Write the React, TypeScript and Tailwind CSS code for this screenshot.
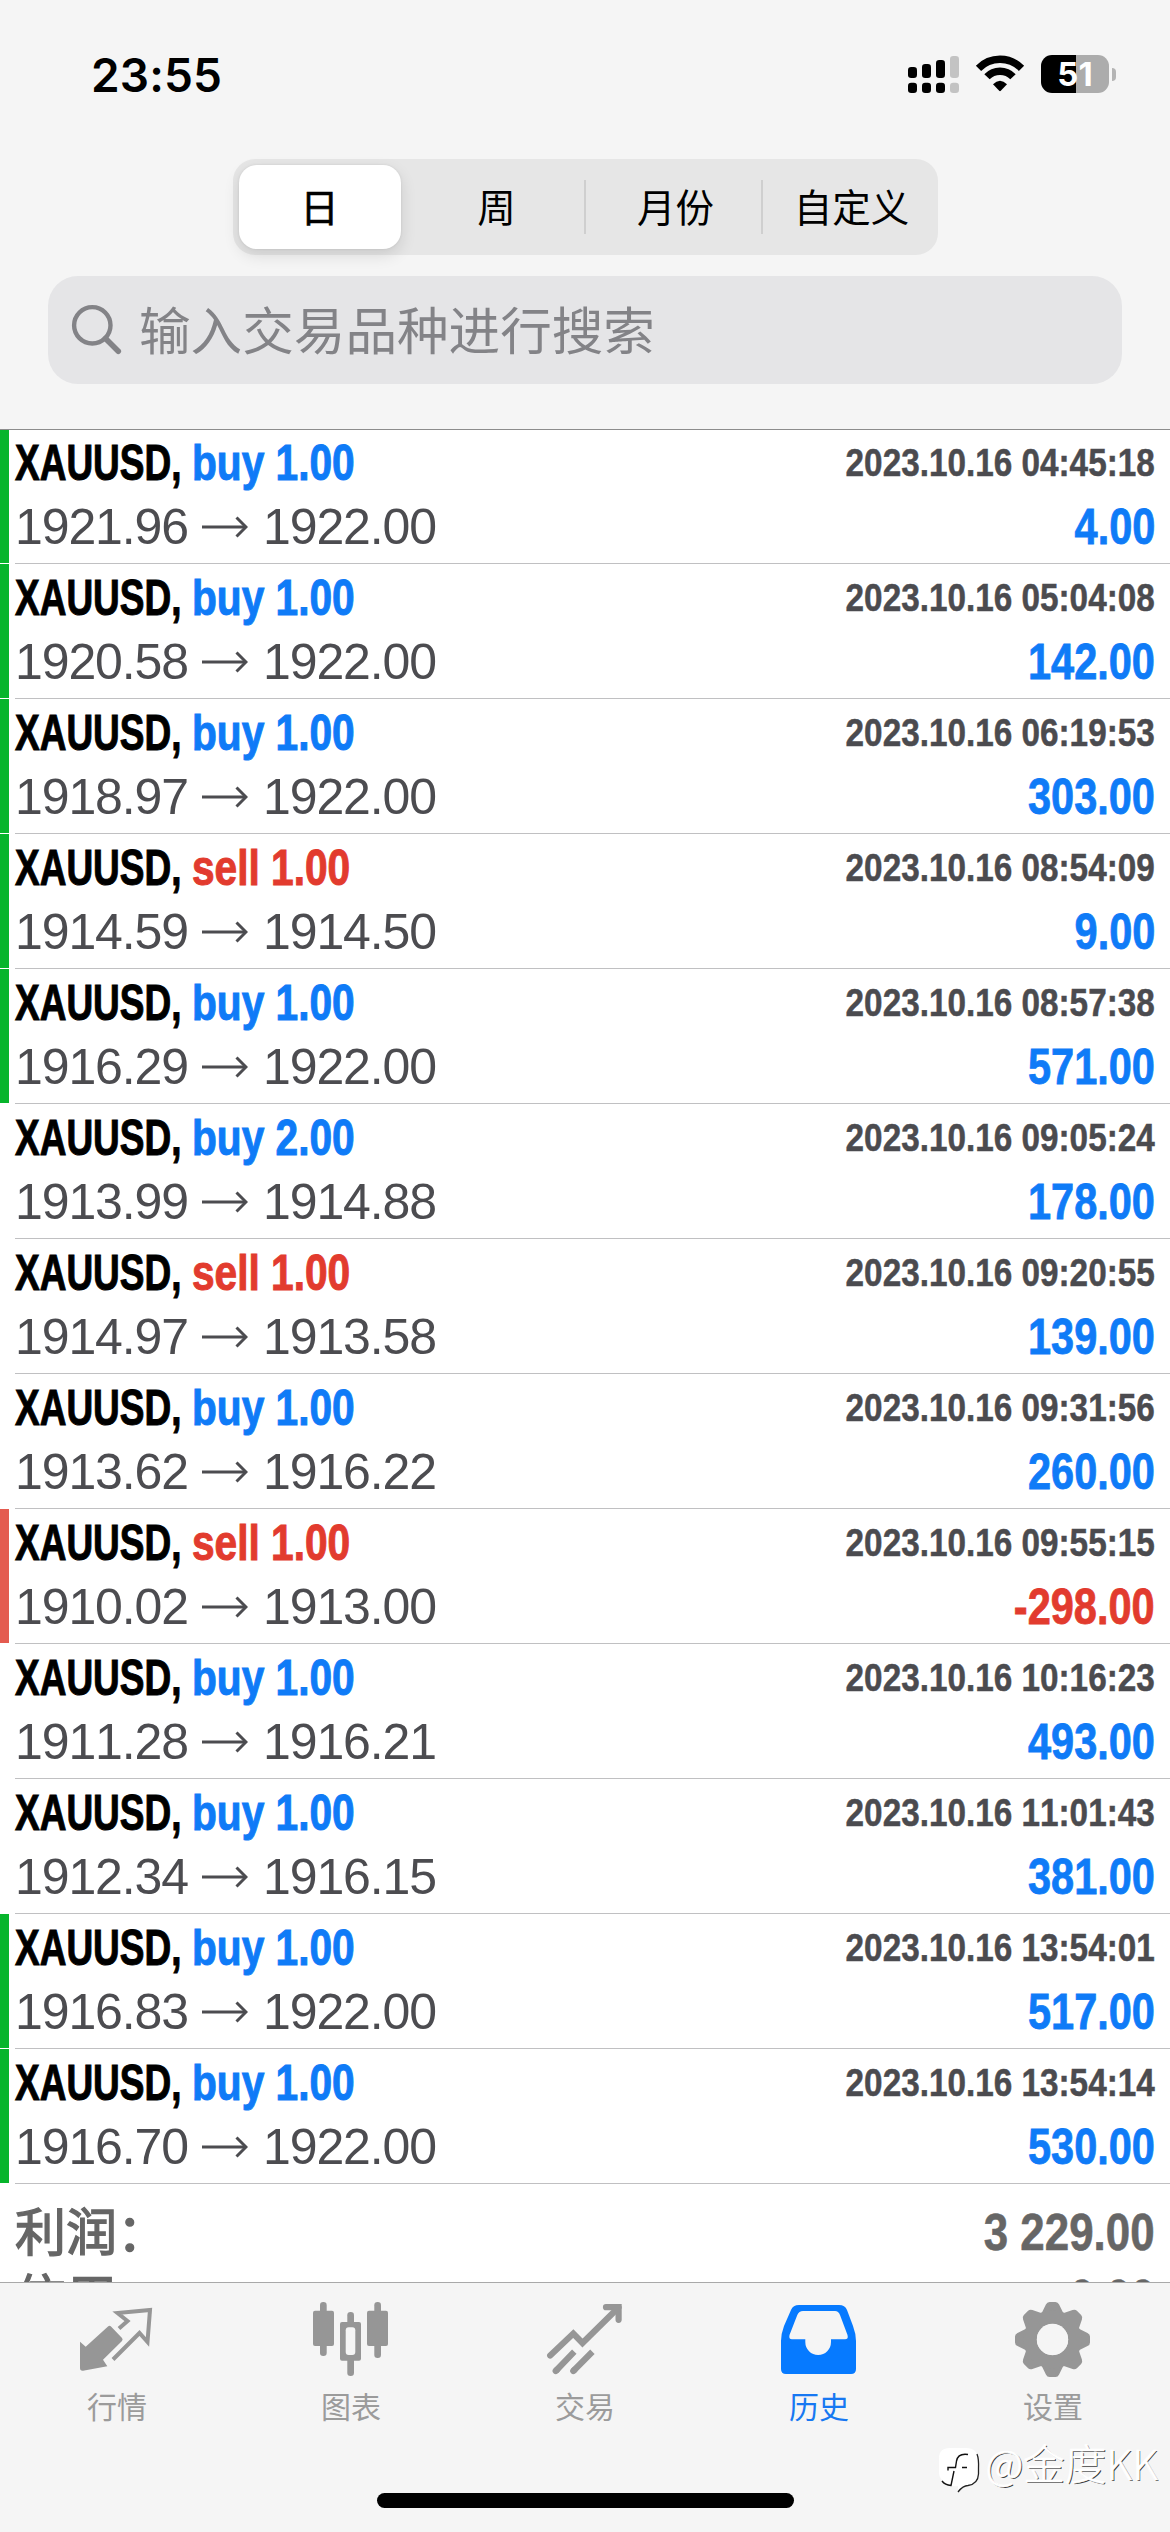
import type { ReactNode } from "react";

type Deal = {
  side: "buy" | "sell";
  volume: string;
  open: string;
  close: string;
  time: string;
  profit: string;
  mark?: "green" | "red";
};

const deals: Deal[] = [
  { side: "buy", volume: "1.00", open: "1921.96", close: "1922.00", time: "2023.10.16 04:45:18", profit: "4.00", mark: "green" },
  { side: "buy", volume: "1.00", open: "1920.58", close: "1922.00", time: "2023.10.16 05:04:08", profit: "142.00", mark: "green" },
  { side: "buy", volume: "1.00", open: "1918.97", close: "1922.00", time: "2023.10.16 06:19:53", profit: "303.00", mark: "green" },
  { side: "sell", volume: "1.00", open: "1914.59", close: "1914.50", time: "2023.10.16 08:54:09", profit: "9.00", mark: "green" },
  { side: "buy", volume: "1.00", open: "1916.29", close: "1922.00", time: "2023.10.16 08:57:38", profit: "571.00", mark: "green" },
  { side: "buy", volume: "2.00", open: "1913.99", close: "1914.88", time: "2023.10.16 09:05:24", profit: "178.00" },
  { side: "sell", volume: "1.00", open: "1914.97", close: "1913.58", time: "2023.10.16 09:20:55", profit: "139.00" },
  { side: "buy", volume: "1.00", open: "1913.62", close: "1916.22", time: "2023.10.16 09:31:56", profit: "260.00" },
  { side: "sell", volume: "1.00", open: "1910.02", close: "1913.00", time: "2023.10.16 09:55:15", profit: "-298.00", mark: "red" },
  { side: "buy", volume: "1.00", open: "1911.28", close: "1916.21", time: "2023.10.16 10:16:23", profit: "493.00" },
  { side: "buy", volume: "1.00", open: "1912.34", close: "1916.15", time: "2023.10.16 11:01:43", profit: "381.00" },
  { side: "buy", volume: "1.00", open: "1916.83", close: "1922.00", time: "2023.10.16 13:54:01", profit: "517.00", mark: "green" },
  { side: "buy", volume: "1.00", open: "1916.70", close: "1922.00", time: "2023.10.16 13:54:14", profit: "530.00", mark: "green" },
];

function StatusBar() {
  return (
    <div className="flex h-[159px] items-start justify-between pl-[91px] pr-[54px]">
      <span className="mt-[47px] font-['Inter'] text-[46px] leading-[56px] font-semibold tracking-[0.1px] text-black">23:55</span>
      <div className="mt-[54px] flex items-start">
        <svg width="54" height="40" viewBox="0 0 54 40">
          <g fill="#000">
            <rect x="0" y="13" width="9" height="11" rx="3.2" />
            <rect x="14" y="10" width="9" height="14" rx="3.2" />
            <rect x="28" y="6" width="9" height="18" rx="3.2" />
            <rect x="0" y="28.7" width="9" height="10.3" rx="3.2" />
            <rect x="14" y="28.7" width="9" height="10.3" rx="3.2" />
            <rect x="28" y="28.7" width="9" height="10.3" rx="3.2" />
          </g>
          <g fill="#c3c3c3">
            <rect x="42" y="2" width="9" height="22" rx="3.2" />
            <rect x="42" y="28.7" width="9" height="10.3" rx="3.2" />
          </g>
        </svg>
        <svg className="ml-[13px]" width="50" height="40" viewBox="0 0 50 40">
          <g fill="none" stroke="#000" strokeWidth="7.4">
            <path d="M3.5 14.3A30 30 0 0 1 46.5 14.3" />
            <path d="M12 22.8A17.9 17.9 0 0 1 38 22.8" />
          </g>
          <path d="M18 30.2Q25 23.2 32 30.2L25.8 36.8Q25 37.6 24.2 36.8Z" fill="#000" />
        </svg>
        <div className="mt-px ml-4 flex items-center">
          <div className="flex h-[38px] w-[68px] items-center justify-center rounded-[11px] bg-[linear-gradient(90deg,#000_51%,#acacac_51%)]">
            <span className="font-['Inter'] text-[33px] leading-none font-bold text-white">51</span>
          </div>
          <div className="ml-[3px] h-[13px] w-[4px] rounded-r-full bg-[#b4b4b4]" />
        </div>
      </div>
    </div>
  );
}

function Segments() {
  return (
    <div className="mx-auto flex h-24 w-[705px] rounded-[22px] bg-[#e6e6e6] font-['Noto_Sans_CJK_SC',sans-serif] text-[38.5px] text-black">
      <div className="my-[6px] ml-[6px] flex w-[162px] items-center justify-center rounded-[18px] bg-white shadow-[0_6px_16px_rgba(0,0,0,0.12),0_0_3px_rgba(0,0,0,0.08)]">
        <span className="-mt-[3px] [-webkit-text-stroke:0.6px]">日</span>
      </div>
      <div className="flex flex-1 items-center justify-center pl-[9px]">
        <span className="-mt-[3px]">周</span>
      </div>
      <div className="my-[21px] w-[2px] bg-[#cfcfcf]" />
      <div className="flex w-[175px] items-center justify-center pl-[5px]">
        <span className="-mt-[3px]">月份</span>
      </div>
      <div className="my-[21px] w-[2px] bg-[#cfcfcf]" />
      <div className="flex w-[175px] items-center justify-center pl-[3px]">
        <span className="-mt-[3px]">自定义</span>
      </div>
    </div>
  );
}

function Search() {
  return (
    <div className="mx-[48px] mt-[21px] flex h-[108px] items-center rounded-[30px] bg-[#e5e5e7] pl-[23px]">
      <svg width="52" height="52" viewBox="0 0 52 52" fill="none" stroke="#838387">
        <circle cx="21.3" cy="21.3" r="18.2" strokeWidth="4.4" />
        <path d="M34.5 34.5L47.3 47.3" strokeWidth="5.6" strokeLinecap="round" />
      </svg>
      <span className="-mt-[5px] ml-[16px] font-['Noto_Sans_CJK_SC',sans-serif] text-[51.6px] leading-[76px] text-[#838387]">输入交易品种进行搜索</span>
    </div>
  );
}

function DealRow({ deal }: { deal: Deal }) {
  const blue = "text-[#0f7bf7]";
  const red = "text-[#e23b2e]";
  return (
    <div className="flex h-[135px] [font-kerning:none]">
      <div className={`h-[134px] w-[9px] ${deal.mark === "green" ? "bg-[#07b52c]" : deal.mark === "red" ? "bg-[#e45b50]" : "bg-white"}`} />
      <div className="ml-[6px] flex-1 border-b border-[#c0c0c2] pt-[6px] pr-[15px]">
        <div className="flex h-[64px] justify-between">
          <div className="flex text-[50px] leading-[56px] font-bold whitespace-pre [-webkit-text-stroke:1px]">
            <span className="block w-[177px] origin-left scale-x-[0.74] text-black">XAUUSD,</span>
            <span className={`block origin-left scale-x-[0.813] ${deal.side === "buy" ? blue : red}`}>{deal.side} {deal.volume}</span>
          </div>
          <span className="mt-[1px] block origin-right scale-x-[0.843] text-[39.5px] leading-[52px] font-bold text-[#4b4b4f] [-webkit-text-stroke:0.5px]">{deal.time}</span>
        </div>
        <div className="flex justify-between text-[50px] leading-[56px]">
          <div className="flex items-center tracking-[-1.1px] text-[#4c4c50]">
            <span className="w-[187px]">{deal.open}</span>
            <svg width="46" height="22" viewBox="0 0 46 22" fill="none" stroke="#4c4c50" strokeWidth="3">
              <path d="M0 11H44" />
              <path d="M34.5 1.5L44 11L34.5 20.5" />
            </svg>
            <span className="ml-[15px]">{deal.close}</span>
          </div>
          <span className={`block origin-right scale-x-[0.83] font-bold [-webkit-text-stroke:0.8px] ${deal.profit.startsWith("-") ? red : blue}`}>{deal.profit}</span>
        </div>
      </div>
    </div>
  );
}

function Total({ label, value }: { label: string; value: string }) {
  return (
    <div className="flex h-[66px] justify-between pr-[15px] pl-[15px] text-[#666]">
      <span className="font-['Noto_Sans_CJK_SC',sans-serif] text-[51px] leading-[66px] [-webkit-text-stroke:1.4px]">{label}</span>
      <span className="mt-[6px] block origin-right scale-x-[0.86] text-[51px] leading-[62px] font-bold [-webkit-text-stroke:0.6px]">{value}</span>
    </div>
  );
}

const tabs: { label: string; active?: boolean; icon: ReactNode }[] = [
  {
    label: "行情",
    icon: (
      <>
        <path d="M3 43.7L8.7 48.7L31 28.5Q32.5 27.2 34 28.5L45 40Q46.2 41.5 45 43L26 61.8L30.3 68.3L6 72.7Q3 73 3 70Z" fill="#969696" />
        <path d="M42 30.5L50.5 23L40.5 15L73 12L70.5 44L62.5 35L36 61.5" fill="none" stroke="#969696" strokeWidth="4" />
      </>
    ),
  },
  {
    label: "图表",
    icon: (
      <g fill="#969696">
        <rect x="9" y="4" width="6.7" height="54" rx="3.2" />
        <rect x="2" y="12.7" width="21" height="35.3" rx="2" />
        <rect x="36.3" y="14" width="6.7" height="64" rx="3.2" />
        <rect x="29" y="24" width="21" height="38.7" rx="2" />
        <rect x="34.7" y="29.3" width="9.6" height="27.7" rx="3" fill="#f5f5f5" />
        <rect x="63.3" y="4" width="6.7" height="56" rx="3.2" />
        <rect x="56" y="12.7" width="21" height="35.3" rx="2" />
      </g>
    ),
  },
  {
    label: "交易",
    icon: (
      <g fill="none" stroke="#969696" strokeWidth="6.2">
        <path d="M5.2 57.5L28.3 35.5L37.5 45L73.5 9.5" strokeLinecap="round" />
        <path d="M61 9.2H73.6V21.8" strokeLinecap="round" />
        <path d="M10.7 73L12 71.7M28.3 73L29.6 71.7" strokeLinecap="round" />
        <path d="M10.7 73L29.3 53.7M28.3 73L47.4 53.7" />
      </g>
    ),
  },
  {
    label: "历史",
    active: true,
    icon: (
      <path
        fill="#067aff"
        fillRule="evenodd"
        d="M20 7H60Q66 7 68 12L74 28Q77 36 77 43V71Q77 76 72 76H7Q2 76 2 71V43Q2 36 5 28L12 12Q14 7 20 7ZM24 13Q20 13 18.3 17L10.5 37Q9.5 41.3 13 41.3H26.3V44A12.85 13 0 0 0 52 44V41.3H66Q69.7 41.3 68.5 37L61 17Q59.5 13 56 13Z"
      />
    ),
  },
  {
    label: "设置",
    icon: (
      <g fill="#969696" transform="translate(39.5 41.5)">
        {[0, 45, 90, 135, 180, 225, 270, 315].map((a) => (
          <path key={a} transform={`rotate(${a})`} d="M-11 -26L-6.6 -35Q-5.4 -37.5 -3 -37.5H3Q5.4 -37.5 6.6 -35L11 -26Z" />
        ))}
        <circle r="22.3" fill="none" stroke="#969696" strokeWidth="13.4" />
        <circle r="15.7" fill="#f5f5f5" />
      </g>
    ),
  },
];

function TabBar() {
  return (
    <nav className="relative h-[250px] border-t border-[#a9a9a9] bg-[#f5f5f5]">
      <div className="grid grid-cols-5 pt-[15px]">
        {tabs.map((t) => (
          <div key={t.label} className="flex flex-col items-center">
            <svg width="80" height="80" viewBox="0 0 80 80">{t.icon}</svg>
            <span className={`mt-[7px] font-['Noto_Sans_CJK_SC',sans-serif] text-[30px] leading-10 ${t.active ? "text-[#1778f2]" : "text-[#9b9b9b]"}`}>{t.label}</span>
          </div>
        ))}
      </div>
      <div className="mx-auto mt-[68px] h-[15px] w-[417px] rounded-full bg-black" />
      <div className="absolute top-[155px] right-[12px] flex items-start">
        <svg className="mt-[7px]" width="46" height="50" viewBox="0 0 46 50" fill="none">
          <path d="M12 3H28Q40 3 40 15V30Q40 39 30 41Q24 41 20 46V41Q13 42 8 38Q1 34 1 28V13Q1 3 12 3Z" fill="#fff" />
          <path d="M39 9Q41 14 40.5 24V29Q40 39 30 40.5Q25 40.5 20 47" stroke="#222" strokeWidth="1.3" />
          <path d="M30 9.500Q20 8 18.500 16L17.500 22.500H10V25.500M24 22.500H29M16 26L13 40.500Q7 40 4 36" stroke="#111" strokeWidth="1.4" />
        </svg>
        <span className="ml-[2px] font-['Noto_Sans_CJK_SC',sans-serif] text-[41.5px] leading-[48px] font-light text-white [-webkit-text-stroke:0.7px_#fff] [text-shadow:1.2px_1.2px_0.5px_rgba(0,0,0,0.75)]">@金度KK</span>
      </div>
    </nav>
  );
}

export default function App() {
  return (
    <div className="flex h-[2532px] w-[1170px] flex-col overflow-hidden bg-white font-['Liberation_Sans',Arial,sans-serif]">
      <header className="relative z-10 -mb-px h-[430px] shrink-0 border-b border-[#8c8c8c] bg-[#f5f5f5]">
        <StatusBar />
        <Segments />
        <Search />
      </header>
      <main className="h-[1854px] shrink-0 overflow-hidden">
        {deals.map((d) => (
          <DealRow key={d.time} deal={d} />
        ))}
        <div className="pt-[12px]">
          <Total label="利润：" value="3 229.00" />
          <Total label="信用：" value="0.00" />
        </div>
      </main>
      <div className="-mt-px shrink-0">
        <TabBar />
      </div>
    </div>
  );
}
